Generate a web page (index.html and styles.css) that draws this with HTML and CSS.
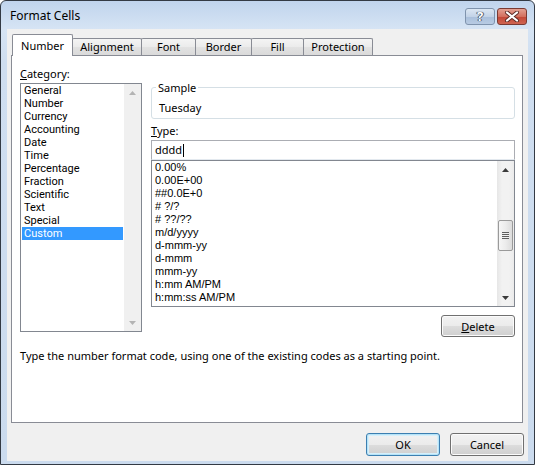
FILE: index.html
```html
<!DOCTYPE html>
<html>
<head>
<meta charset="utf-8">
<title>Format Cells</title>
<link rel="stylesheet" href="styles.css">
</head>
<body>
<div class="window">
  <div class="titlebar">
    <span class="title">Format Cells</span>
    <div class="caption-btns">
      <span class="cap help">?</span>
      <span class="cap close">
        <svg width="16" height="11" viewBox="0 0 16 11">
          <path d="M3 1.5 L13 9.5 M13 1.5 L3 9.5" stroke="#5a2a26" stroke-width="4" stroke-linecap="round"/>
          <path d="M3 1.5 L13 9.5 M13 1.5 L3 9.5" stroke="#ffffff" stroke-width="2.2" stroke-linecap="round"/>
        </svg>
      </span>
    </div>
  </div>
  <div class="client">
    <div class="tabs">
      <div class="tab selected w-number">Number</div>
      <div class="tab w-align">Alignment</div>
      <div class="tab w-font">Font</div>
      <div class="tab w-border">Border</div>
      <div class="tab w-fill">Fill</div>
      <div class="tab w-prot">Protection</div>
    </div>
    <div class="panel">
      <div class="row">
        <div class="left">
          <div class="label"><u>C</u>ategory:</div>
          <div class="listbox cat-list">
            <div class="items">
              <div class="item">General</div>
              <div class="item">Number</div>
              <div class="item">Currency</div>
              <div class="item">Accounting</div>
              <div class="item">Date</div>
              <div class="item">Time</div>
              <div class="item">Percentage</div>
              <div class="item">Fraction</div>
              <div class="item">Scientific</div>
              <div class="item">Text</div>
              <div class="item">Special</div>
              <div class="item active">Custom</div>
            </div>
            <div class="vscroll disabled">
              <div class="arrow"><svg width="7" height="4" viewBox="0 0 7 4"><path d="M0 4 L3.5 0 L7 4 Z" fill="#b4b4b4"/></svg></div>
              <div class="track"></div>
              <div class="arrow"><svg width="7" height="4" viewBox="0 0 7 4"><path d="M0 0 L7 0 L3.5 4 Z" fill="#b4b4b4"/></svg></div>
            </div>
          </div>
        </div>
        <div class="right">
          <div class="sample">
            <div class="legend">Sample</div>
            <div class="sample-val">Tuesday</div>
          </div>
          <div class="label type-label"><u>T</u>ype:</div>
          <div class="input">dddd<span class="caret"></span></div>
          <div class="listbox type-list">
            <div class="items">
              <div class="titem">0.00%</div>
              <div class="titem">0.00E+00</div>
              <div class="titem">##0.0E+0</div>
              <div class="titem"># ?/?</div>
              <div class="titem"># ??/??</div>
              <div class="titem">m/d/yyyy</div>
              <div class="titem">d-mmm-yy</div>
              <div class="titem">d-mmm</div>
              <div class="titem">mmm-yy</div>
              <div class="titem">h:mm AM/PM</div>
              <div class="titem">h:mm:ss AM/PM</div>
            </div>
            <div class="vscroll">
              <div class="arrow"><svg width="7" height="4" viewBox="0 0 7 4"><path d="M0 4 L3.5 0 L7 4 Z" fill="#3b3b3b"/></svg></div>
              <div class="track">
                <div class="thumb"><span class="grip"></span></div>
              </div>
              <div class="arrow"><svg width="7" height="4" viewBox="0 0 7 4"><path d="M0 0 L7 0 L3.5 4 Z" fill="#3b3b3b"/></svg></div>
            </div>
          </div>
          <div class="delete-row">
            <button class="btn btn-delete"><u>D</u>elete</button>
          </div>
        </div>
      </div>
      <p class="desc">Type the number format code, using one of the existing codes as a starting point.</p>
    </div>
    <div class="footer">
      <button class="btn default">OK</button>
      <button class="btn">Cancel</button>
    </div>
  </div>
</div>
</body>
</html>
```

FILE: styles.css
```css
* { box-sizing: border-box; }

html, body {
  margin: 0;
  padding: 0;
  background: #ffffff;
}

body {
  width: 535px;
  height: 465px;
  overflow: hidden;
  font-family: "Noto Sans", "Open Sans", sans-serif;
  font-size: 11px;
  color: #000;
}

.window {
  width: 535px;
  height: 465px;
  border: 1px solid #333a44;
  border-radius: 6px 6px 0 0;
  background: linear-gradient(#c0d4ed, #d6e4f4 28px, #cfdef0 60px, #cbdbee);
  padding: 0 6px 3px 6px;
  display: flex;
  flex-direction: column;
}

/* Title bar */
.titlebar {
  height: 28px;
  flex-shrink: 0;
  display: flex;
  align-items: flex-start;
}

.title {
  padding-left: 3px;
  line-height: 29px;
  font-size: 12px;
  color: #000;
}

.caption-btns {
  margin-left: auto;
  margin-top: 7px;
  margin-right: 1px;
  display: flex;
  gap: 2px;
}

.cap {
  width: 30px;
  height: 17px;
  border-radius: 3px;
  display: flex;
  align-items: center;
  justify-content: center;
}

.help {
  border: 1px solid #7f93ad;
  background: linear-gradient(#dbe6f3, #c3d3e7 50%, #a9bfdb 51%, #b8cbe3);
  color: #fff;
  font-weight: bold;
  font-size: 13px;
  line-height: 15px;
  text-shadow: 0 0 1px #3e4a5a, 0 0 1px #3e4a5a, 1px 0 0 #5a677a, -1px 0 0 #5a677a;
}

.close {
  border: 1px solid #7a3a33;
  background: linear-gradient(#e3a092, #d3705f 50%, #c24636 51%, #cf6552);
}

/* Client */
.client {
  flex: 1;
  background: #f0f0f0;
  padding-top: 5px;
  display: flex;
  flex-direction: column;
}

.tabs {
  display: flex;
  align-items: flex-end;
  margin-left: 5px;
  height: 22px;
  margin-bottom: -1px;
  position: relative;
  z-index: 1;
}

.tab {
  height: 17px;
  margin-bottom: 1px;
  border: 1px solid #898c95;
  border-bottom: none;
  border-radius: 2px 2px 0 0;
  background: linear-gradient(#f4f4f4, #ebebeb 50%, #e2e2e2 51%, #dadada);
  display: flex;
  justify-content: center;
  padding-top: 1px;
  line-height: 14px;
  margin-left: -1px;
}

.tab.selected {
  height: 22px;
  margin-bottom: 0;
  margin-left: 0;
  background: #ffffff;
  padding-top: 4px;
  position: relative;
  z-index: 2;
}

.w-number { width: 61px; }
.w-align { width: 70px; }
.w-font { width: 55px; }
.w-border { width: 57px; }
.w-fill { width: 53px; }
.w-prot { width: 70px; }

.panel {
  margin-left: 4px;
  width: 512px;
  height: 368px;
  border: 1px solid #898c95;
  background: #ffffff;
  padding: 10px 7px 0 8px;
}

.row {
  display: flex;
  gap: 9px;
}

.left {
  width: 122px;
}

.label {
  height: 15px;
  line-height: 15px;
  margin-bottom: 2px;
}

.listbox {
  border: 1px solid #828790;
  background: #fff;
  display: flex;
}

.listbox .items {
  flex: 1;
  min-width: 0;
}

.cat-list {
  height: 249px;
}

.item {
  font-family: Roboto, "Noto Sans", sans-serif;
  font-size: 11px;
  height: 13px;
  line-height: 13px;
  margin: 0 1px;
  padding-left: 2px;
  white-space: nowrap;
}

.item.active {
  background: #3399ff;
  color: #ffffff;
}

.vscroll {
  width: 17px;
  display: flex;
  flex-direction: column;
  background: linear-gradient(to right, #e6e6e6, #f2f2f2 30%, #f2f2f2 70%, #ebebeb);
}

.vscroll.disabled {
  background: #f0f0f0;
}

.arrow {
  height: 17px;
  display: flex;
  align-items: center;
  justify-content: center;
  flex-shrink: 0;
}

.track {
  flex: 1;
}

.thumb {
  margin: 42px 1px 0 1px;
  height: 31px;
  border: 1px solid #9a9a9a;
  border-radius: 2px;
  background: linear-gradient(to right, #f6f6f6, #ececec 50%, #dcdcdc);
  display: flex;
  align-items: center;
  justify-content: center;
}

.grip {
  width: 7px;
  height: 7px;
  background: repeating-linear-gradient(#5e5e5e 0, #5e5e5e 1px, #f0f0f0 1px, #f0f0f0 2px);
}

.right {
  width: 364px;
}

.sample {
  margin-top: 21px;
  height: 32px;
  border: 1px solid #d5dfe5;
  border-radius: 3px;
}

.legend {
  margin-top: -7px;
  margin-left: 4px;
  width: max-content;
  padding: 0 2px;
  background: #fff;
  line-height: 14px;
}

.sample-val {
  margin-top: 6px;
  padding-left: 7px;
  line-height: 14px;
}

.type-label {
  margin-top: 5px;
  height: 14px;
  line-height: 14px;
  margin-bottom: 2px;
}

.input {
  height: 20px;
  border: 1px solid #abadb3;
  border-bottom-color: #e3e9ef;
  padding-left: 3px;
  line-height: 18px;
  display: flex;
  align-items: center;
}

.caret {
  display: inline-block;
  width: 1px;
  height: 13px;
  background: #000;
  margin-left: 1px;
}

.type-list {
  height: 147px;
}

.titem {
  font-family: "Liberation Sans", Arial, sans-serif;
  font-size: 11px;
  height: 13px;
  line-height: 13px;
  padding-left: 3px;
  white-space: nowrap;
}

.delete-row {
  margin-top: 8px;
  display: flex;
  justify-content: flex-end;
}

.btn {
  width: 74px;
  height: 23px;
  border: 1px solid #707070;
  border-radius: 3px;
  background: linear-gradient(#f2f2f2, #ebebeb 50%, #dddddd 51%, #cfcfcf);
  box-shadow: inset 0 0 0 1px #fbfbfb;
  font-family: "Noto Sans", "Open Sans", sans-serif;
  font-size: 11px;
  color: #000;
  padding: 0;
  line-height: 19px;
}

.btn-delete {
  height: 22px;
}

.btn.default {
  border-color: #3c7fb1;
  box-shadow: inset 0 0 0 1px #b6e3f7, inset 0 0 0 2px #d5effb;
}

.desc {
  margin: 11px 0 0 0;
  line-height: 15px;
}

.footer {
  margin-top: 10px;
  display: flex;
  justify-content: flex-end;
  gap: 10px;
  padding-right: 4px;
}
```
